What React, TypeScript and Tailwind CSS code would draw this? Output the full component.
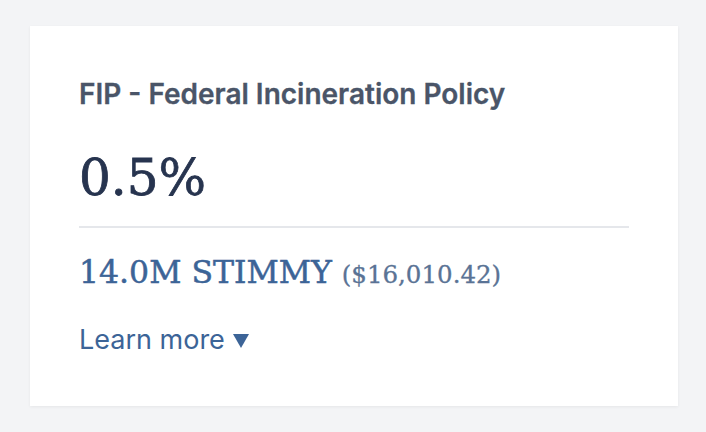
export default function App() {
  return (
    <div className="min-h-screen bg-[#f3f4f6] pl-[30px] pt-[26px]">
      <div className="w-[648px] bg-white px-[49px] pb-[50px] pt-[52px] shadow-[0_1px_3px_rgba(0,0,0,0.06)]">
        {/* Title */}
        <h2 className="font-['Inter',sans-serif] text-[28px] font-semibold leading-[32px] text-[#4a5568] [-webkit-text-stroke:0.3px_#4a5568]">
          FIP - Federal Incineration Policy
        </h2>

        {/* Rate */}
        <div className="mt-[43px] font-['DejaVu_Serif',serif] text-[50px] leading-[50px] text-[#27344f] [-webkit-text-stroke:0.8px_#27344f]">
          0.5%
        </div>

        <div className="mt-[23px] h-[2px] bg-[#e5e7eb]" />

        {/* Amount */}
        <div className="mt-[24px] font-['DejaVu_Serif',serif] text-[31.5px] leading-[40px] text-[#3c6497] [-webkit-text-stroke:0.5px_#3c6497]">
          14.0M STIMMY{" "}
          <span className="text-[24.5px] text-[#5a7395] [-webkit-text-stroke:0.3px_#5a7395]">
            ($16,010.42)
          </span>
        </div>

        {/* Learn more */}
        <button className="mt-[29px] flex items-center gap-[8px] font-['Inter',sans-serif] text-[27px] leading-[32px] text-[#3c6497]">
          Learn more
          <svg width="16" height="14" viewBox="0 0 16 14" className="mt-[1px]">
            <polygon points="0,0 16,0 8,14" fill="currentColor" />
          </svg>
        </button>
      </div>
    </div>
  );
}
